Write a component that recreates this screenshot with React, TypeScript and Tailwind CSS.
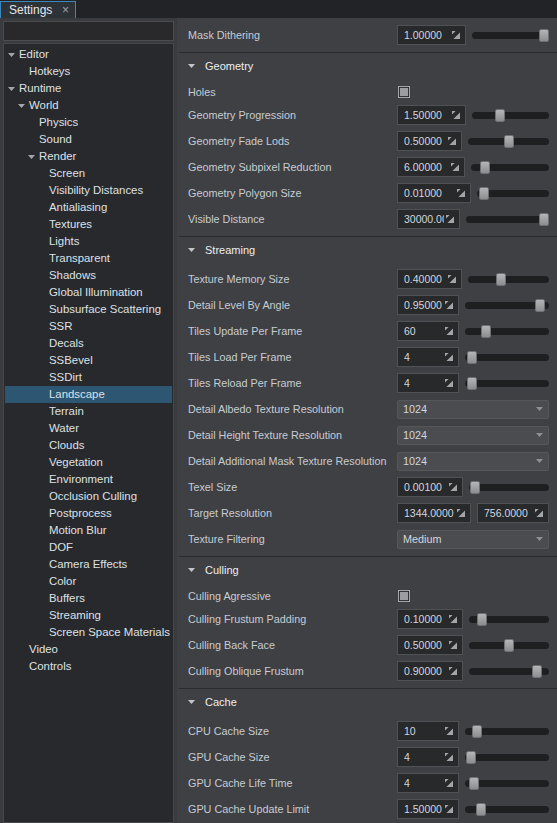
import React from "react";

type Row =
  | { kind: "slider"; label: string; value: string; w: number; f: number }
  | { kind: "check"; label: string }
  | { kind: "drop"; label: string; value: string }
  | { kind: "pair"; label: string; a: string; aw: number; b: string };

const sections: { title: string; rows: Row[] }[] = [
  {
    title: "Geometry",
    rows: [
      { kind: "check", label: "Holes" },
      { kind: "slider", label: "Geometry Progression", value: "1.50000", w: 69, f: 0.35 },
      { kind: "slider", label: "Geometry Fade Lods", value: "0.50000", w: 65, f: 0.5 },
      { kind: "slider", label: "Geometry Subpixel Reduction", value: "6.00000", w: 68, f: 0.13 },
      { kind: "slider", label: "Geometry Polygon Size", value: "0.01000", w: 74, f: 0.03 },
      { kind: "slider", label: "Visible Distance", value: "30000.0000", w: 63, f: 1 },
    ],
  },
  {
    title: "Streaming",
    rows: [
      { kind: "slider", label: "Texture Memory Size", value: "0.40000", w: 65, f: 0.4 },
      { kind: "slider", label: "Detail Level By Angle", value: "0.95000", w: 62, f: 0.95 },
      { kind: "slider", label: "Tiles Update Per Frame", value: "60", w: 62, f: 0.22 },
      { kind: "slider", label: "Tiles Load Per Frame", value: "4", w: 62, f: 0.03 },
      { kind: "slider", label: "Tiles Reload Per Frame", value: "4", w: 62, f: 0.03 },
      { kind: "drop", label: "Detail Albedo Texture Resolution", value: "1024" },
      { kind: "drop", label: "Detail Height Texture Resolution", value: "1024" },
      { kind: "drop", label: "Detail Additional Mask Texture Resolution", value: "1024" },
      { kind: "slider", label: "Texel Size", value: "0.00100", w: 66, f: 0.02 },
      { kind: "pair", label: "Target Resolution", a: "1344.0000", aw: 74, b: "756.0000" },
      { kind: "drop", label: "Texture Filtering", value: "Medium" },
    ],
  },
  {
    title: "Culling",
    rows: [
      { kind: "check", label: "Culling Agressive" },
      { kind: "slider", label: "Culling Frustum Padding", value: "0.10000", w: 66, f: 0.12 },
      { kind: "slider", label: "Culling Back Face", value: "0.50000", w: 66, f: 0.5 },
      { kind: "slider", label: "Culling Oblique Frustum", value: "0.90000", w: 66, f: 0.9 },
    ],
  },
  {
    title: "Cache",
    rows: [
      { kind: "slider", label: "CPU Cache Size", value: "10", w: 62, f: 0.1 },
      { kind: "slider", label: "GPU Cache Size", value: "4", w: 62, f: 0.02 },
      { kind: "slider", label: "GPU Cache Life Time", value: "4", w: 62, f: 0.06 },
      { kind: "slider", label: "GPU Cache Update Limit", value: "1.50000", w: 62, f: 0.15 },
    ],
  },
];

type TreeItem = { label: string; level: number; open?: boolean; selected?: boolean };

const renderChildren = [
  "Screen", "Visibility Distances", "Antialiasing", "Textures", "Lights", "Transparent",
  "Shadows", "Global Illumination", "Subsurface Scattering", "SSR", "Decals", "SSBevel",
  "SSDirt", "Landscape", "Terrain", "Water", "Clouds", "Vegetation", "Environment",
  "Occlusion Culling", "Postprocess", "Motion Blur", "DOF", "Camera Effects", "Color",
  "Buffers", "Streaming", "Screen Space Materials",
];

const tree: TreeItem[] = [
  { label: "Editor", level: 0, open: true },
  { label: "Hotkeys", level: 1 },
  { label: "Runtime", level: 0, open: true },
  { label: "World", level: 1, open: true },
  { label: "Physics", level: 2 },
  { label: "Sound", level: 2 },
  { label: "Render", level: 2, open: true },
  ...renderChildren.map((l) => ({ label: l, level: 3, selected: l === "Landscape" })),
  { label: "Video", level: 1 },
  { label: "Controls", level: 1 },
];

const padByLevel = ["pl-[3px]", "pl-[13px]", "pl-[23px]", "pl-[33px]"];

function Tri({ color = "#a3a5a8" }: { color?: string }) {
  return (
    <svg width="7" height="4" viewBox="0 0 7 4" className="shrink-0">
      <polygon points="0,0 7,0 3.5,4" fill={color} />
    </svg>
  );
}

function DragIcon() {
  return (
    <svg width="8" height="8" viewBox="0 0 8 8" className="shrink-0">
      <polygon points="0,0 3.6,0 0,3.6" fill="#a4a5a8" />
      <polygon points="8,1.4 8,8 1.4,8" fill="#a4a5a8" />
    </svg>
  );
}

function NumBox({ value, w }: { value: string; w: number }) {
  return (
    <div
      className="h-[20px] shrink-0 flex items-center bg-[#28292b] border border-[#505154] pl-[6px] pr-[5px] gap-[2px]"
      style={{ width: w }}
    >
      <span className="flex-1 overflow-hidden whitespace-nowrap text-[10.5px] text-[#d3d7dd] leading-[14px]">
        {value}
      </span>
      <DragIcon />
    </div>
  );
}

function Slider({ f }: { f: number }) {
  return (
    <div className="relative flex-1 h-[13px]">
      <div className="absolute inset-x-0 top-[3px] h-[7px] rounded-full bg-[#1e1f21]" />
      <div
        className="absolute top-0 w-[10px] h-[13px] rounded-[2px] bg-gradient-to-b from-[#b4b5b7] to-[#8c8d90] border border-[#6f7073]"
        style={{ left: `calc(${f * 100}% - ${f * 10}px)` }}
      />
    </div>
  );
}

function Checkbox() {
  return (
    <div className="w-[12px] h-[12px] border border-[#a2a3a6] bg-[#333437] flex items-center justify-center">
      <div className="w-[8px] h-[8px] bg-[#9c9da0]" />
    </div>
  );
}

function Dropdown({ value }: { value: string }) {
  return (
    <div className="h-[19px] flex-1 flex items-center bg-[#4b4c50] border border-[#56575b] rounded-[2px] pl-[5px] pr-[5px]">
      <span className="flex-1 text-[10.8px] text-[#d3d7dd] leading-[14px]">{value}</span>
      <Tri color="#8e8f92" />
    </div>
  );
}

function Label({ text }: { text: string }) {
  return (
    <div className="w-[209px] shrink-0 text-[10.8px] text-[#c6ccd4] whitespace-nowrap overflow-hidden leading-[14px]">
      {text}
    </div>
  );
}

function RowView({ row }: { row: Row }) {
  if (row.kind === "check") {
    return (
      <div className="h-[20px] flex items-center pl-[11px] pr-[8px]">
        <Label text={row.label} />
        <div className="pl-[1px]">
          <Checkbox />
        </div>
      </div>
    );
  }
  return (
    <div className="h-[26px] flex items-center pl-[11px] pr-[8px]">
      <Label text={row.label} />
      <div className="flex-1 flex items-center gap-[6px]">
        {row.kind === "slider" && (
          <>
            <NumBox value={row.value} w={row.w} />
            <Slider f={row.f} />
          </>
        )}
        {row.kind === "drop" && <Dropdown value={row.value} />}
        {row.kind === "pair" && (
          <>
            <NumBox value={row.a} w={row.aw} />
            <div className="flex-1 flex">
              <div className="h-[20px] flex-1 flex items-center bg-[#28292b] border border-[#505154] pl-[6px] pr-[5px] gap-[2px]">
                <span className="flex-1 overflow-hidden whitespace-nowrap text-[10.5px] text-[#d3d7dd] leading-[14px]">
                  {row.b}
                </span>
                <DragIcon />
              </div>
            </div>
          </>
        )}
      </div>
    </div>
  );
}

export default function App() {
  return (
    <div className="w-[557px] h-[823px] flex flex-col overflow-hidden bg-[#3f4043] font-['Liberation_Sans',Arial,sans-serif]">
      {/* tab bar */}
      <div className="h-[18px] shrink-0 bg-[#222326] flex items-end">
        <div className="h-[17px] w-[76px] flex items-center bg-[#2d3237] border-t border-x border-[#3f86ba] pl-[8px] pr-[6px]">
          <span className="flex-1 text-[12px] text-[#e4e6e9] leading-[15px]">Settings</span>
          <span className="text-[12px] text-[#9fa1a4] leading-[15px]">×</span>
        </div>
      </div>

      <div className="flex flex-1 min-h-0">
        {/* left */}
        <div className="w-[177px] shrink-0 bg-[#3a3b3e] flex flex-col pt-[3px] pl-[3px] pr-[3px] gap-[2px]">
          <div className="h-[20px] shrink-0 bg-[#29292b] border border-[#4b4c4f]" />
          <div className="flex-1 bg-[#28292c] border border-[#46474a] pt-[2px] flex flex-col">
            {tree.map((t, i) => (
              <div
                key={i}
                className={`h-[17px] shrink-0 flex items-center mx-[1px] ${padByLevel[t.level]} ${
                  t.selected ? "bg-[#2c5672]" : ""
                }`}
              >
                <div className="w-[11px] shrink-0 flex items-center">{t.open && <Tri />}</div>
                <span className="text-[11.4px] text-[#dde1e6] leading-[15px] whitespace-nowrap">{t.label}</span>
              </div>
            ))}
          </div>
        </div>

        {/* right */}
        <div className="flex-1 flex flex-col pt-[4px]">
          <div className="pb-[4px]">
            <RowView row={{ kind: "slider", label: "Mask Dithering", value: "1.00000", w: 69, f: 1 }} />
          </div>
          {sections.map((s) => (
            <div key={s.title} className="flex flex-col">
              <div className="h-px ml-[2px] bg-[#292a2c]" />
              <div className="h-[26px] flex items-center pl-[11px] gap-[10px]">
                <Tri color="#c3c5c8" />
                <span className="text-[11px] text-[#eceef0] leading-[14px]">{s.title}</span>
              </div>
              <div className="pt-[3px] pb-[4px] flex flex-col">
                {s.rows.map((r) => (
                  <RowView key={r.label} row={r} />
                ))}
              </div>
            </div>
          ))}
        </div>
      </div>
    </div>
  );
}
